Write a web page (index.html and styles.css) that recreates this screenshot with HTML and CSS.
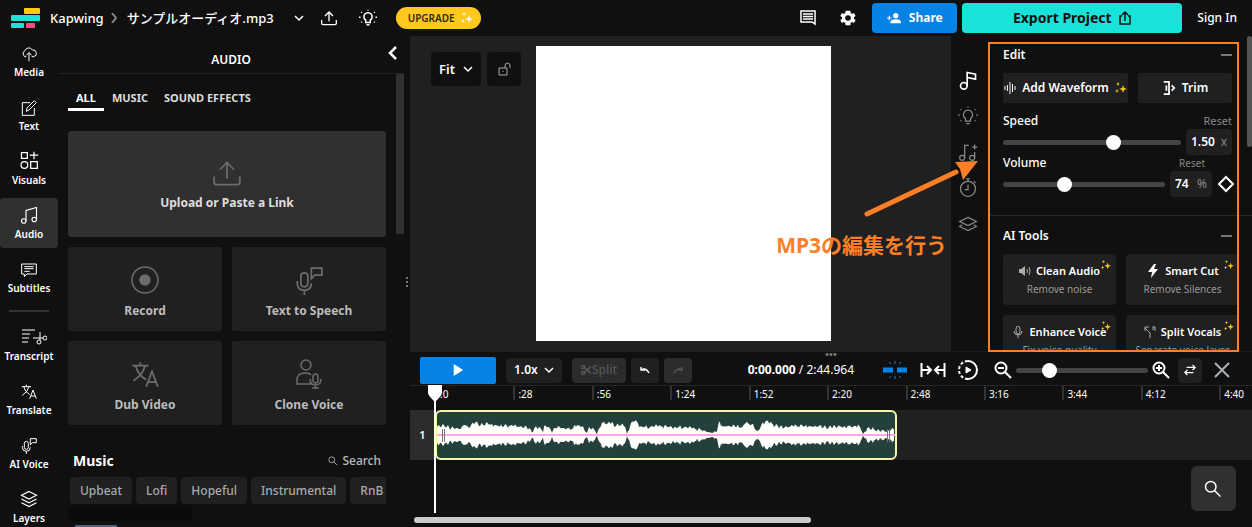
FILE: index.html
```html
<!DOCTYPE html>
<html lang="ja">
<head>
    <meta charset="UTF-8">
    <meta name="viewport" content="width=device-width, initial-scale=1.0">
    <title>Kapwing - サンプルオーディオ.mp3</title>
    <link rel="stylesheet" href="styles.css">
</head>
<body>
    <!-- shared icons -->
    <svg class="defs" aria-hidden="true">
        <symbol id="chevron" viewBox="0 0 10 10"><path d="M1 3l4 4 4-4"/></symbol>
        <symbol id="upload" viewBox="0 0 24 24"><path d="M12 17V3M6 9l6-6 6 6M1 15v5q0 2 2 2h18q2 0 2-2v-5"/></symbol>
        <symbol id="bulb" viewBox="0 0 24 24"><path d="M9 18v-3a5.500 5.500 0 1 1 6 0v3zM10 21h4M12 1v1M3 4l1 1M21 4l-1 1M0 11h2M22 11h2M3 18l1-1M21 18l-1-1"/></symbol>
        <symbol id="sparkle" viewBox="0 0 12 12"><path d="M8 3l1 3 3 1-3 1-1 3-1-3-3-1 3-1zM3 0l.6 1.400L5 2l-1.400.6L3 4l-.6-1.400L1 2l1.400-.6zM2 7l.6 1.400L4 9l-1.400.6L2 11l-.6-1.400L0 9l1.400-.6z"/></symbol>
        <symbol id="mic" viewBox="0 0 24 24"><path d="M5 8q0-3 3-3t3 3v6q0 3-3 3t-3-3zM2 12v2q0 6 6 6t6-6M8 20v4M14 10V1h9v6h-6z"/></symbol>
        <symbol id="translate" viewBox="0 0 24 24"><path d="M1 4h14M8 1v3M4 4q2 8 9 12M12 4Q10 12 2 17M13 22l5-13 5 13M15 18h6"/></symbol>
        <symbol id="layers" viewBox="0 0 24 24"><path d="M12 2l10 5-10 5L2 7zM2 12l10 5 10-5M2 17l10 5 10-5"/></symbol>
        <symbol id="lens" viewBox="0 0 24 24"><circle cx="9" cy="9" r="7"/><path d="M14 14l8 8"/></symbol>
    </svg>

    <header class="topbar">
        <svg class="logo" viewBox="0 0 30 20" role="img" aria-label="Kapwing">
            <rect x="13" y="0" width="16" height="6" rx="1" fill="#ffc81e"/>
            <rect x="0" y="7" width="29" height="6" rx="1" fill="#1be3d9"/>
            <rect x="0" y="15" width="13" height="5" rx="1" fill="#1be3d9"/>
            <rect x="15" y="15" width="9" height="5" rx="1" fill="#ff4a8b"/>
        </svg>
        <a class="brand" href="#">Kapwing</a>
        <svg class="icon crumb" viewBox="0 0 10 10"><path d="M3 0l4 5-4 5"/></svg>
        <span class="project">サンプルオーディオ.mp3</span>
        <button class="plain" aria-label="Project menu"><svg class="icon s10 thin"><use href="#chevron"/></svg></button>
        <button class="plain" aria-label="Upload"><svg class="icon s16"><use href="#upload"/></svg></button>
        <button class="plain" aria-label="Tips"><svg class="icon s18"><use href="#bulb"/></svg></button>
        <button class="upgrade">UPGRADE <svg class="spark s12"><use href="#sparkle"/></svg></button>
        <div class="top_right">
            <button class="plain" aria-label="Comments"><svg class="icon s16" viewBox="0 0 16 16"><path d="M1 1h14v13l-3-2H1zM3 4h10M3 6.500h10M3 9h10" stroke-width="1.500"/></svg></button>
            <button class="plain" aria-label="Settings"><svg class="s16 solid" viewBox="2 2 20 20"><path fill-rule="evenodd" d="M19.400 13a7.500 7.500 0 0 0 0-2l2.100-1.600-2-3.500-2.500 1a7.500 7.500 0 0 0-1.700-1L15 3H9l-.4 2.900a7.500 7.500 0 0 0-1.700 1l-2.500-1-2 3.500L4.600 11a7.500 7.500 0 0 0 0 2l-2.200 1.600 2 3.500 2.500-1a7.500 7.500 0 0 0 1.700 1L9 21h6l.3-2.900a7.500 7.500 0 0 0 1.700-1l2.500 1 2-3.500zM12 15.500a3.500 3.500 0 1 1 0-7 3.500 3.500 0 0 1 0 7z"/></svg></button>
            <button class="share"><svg class="solid s14" viewBox="0 0 24 24"><circle cx="15" cy="8" r="4.500"/><path d="M6 21v-2q0-5 9-5t9 5v2zM3 8h2v3h3v2H5v3H3v-3H0v-2h3z"/></svg> Share</button>
            <button class="export">Export Project <svg class="icon s14 thin" viewBox="0 0 14 14"><path d="M4 5H2v8h10V5h-2M7 10V1M4 4l3-3 3 3"/></svg></button>
            <a class="signin" href="#">Sign In</a>
        </div>
    </header>

    <div class="workspace">
        <nav class="sidebar">
            <a href="#"><svg class="icon s16" viewBox="0 0 24 24"><path d="M8 16H6a5 5 0 0 1 0-9 6 6 0 0 1 11-1 5 5 0 0 1 2 10h-3M12 23V10M8 14l4-4 4 4"/></svg>Media</a>
            <a href="#"><svg class="icon s16" viewBox="0 0 24 24"><path d="M14 4H2v19h18V12M8 17l1-5L20 1l3 3-11 11z"/></svg>Text</a>
            <a href="#"><svg class="icon s20" viewBox="0 0 24 24"><path d="M3 3h7v7H3zM14 14h8v8h-8zM18 2v9M13 6h10"/><circle cx="6.500" cy="18" r="4"/></svg>Visuals</a>
            <a href="#" class="active"><svg class="icon s18" viewBox="0 0 24 24"><path d="M8 20V6l14-4v16"/><circle cx="5" cy="20" r="3"/><circle cx="19" cy="18" r="3"/></svg>Audio</a>
            <a href="#"><svg class="icon s16" viewBox="0 0 24 24"><path d="M1 3h22v15H9l-4 4v-4H1zM5 7h14M5 10h14M5 14h8"/></svg>Subtitles</a>
            <hr>
            <a href="#"><svg class="icon wide" viewBox="0 0 26 18"><path d="M1 2h13M1 6h8M1 10h7M1 14h6M19 4v8M12 10h10"/><circle cx="18" cy="14" r="2"/><circle cx="24" cy="10" r="2"/></svg>Transcript</a>
            <a href="#"><svg class="icon s16"><use href="#translate"/></svg>Translate</a>
            <a href="#"><svg class="icon s16"><use href="#mic"/></svg>AI Voice</a>
            <a href="#"><svg class="icon s18"><use href="#layers"/></svg>Layers</a>
        </nav>

        <section class="panel">
            <div class="panel_head">
                <h2>AUDIO</h2>
                <button class="plain collapse" aria-label="Collapse"><svg class="icon s14" viewBox="0 0 14 14"><path d="M11 1L5 7l6 6" stroke-width="2.500"/></svg></button>
            </div>
            <div class="panel_body">
                <div class="tabs">
                    <button class="on">ALL</button>
                    <button>MUSIC</button>
                    <button>SOUND EFFECTS</button>
                </div>
                <div class="cards">
                    <button class="card upload"><svg class="icon s28"><use href="#upload"/></svg>Upload or Paste a Link</button>
                    <button class="card"><svg class="icon s30" viewBox="0 0 30 30"><circle cx="15" cy="15" r="13"/><circle cx="15" cy="15" r="5" fill="currentColor"/></svg>Record</button>
                    <button class="card"><svg class="icon s28"><use href="#mic"/></svg>Text to Speech</button>
                    <button class="card"><svg class="icon s28"><use href="#translate"/></svg>Dub Video</button>
                    <button class="card"><svg class="icon s30" viewBox="0 0 30 30"><circle cx="12" cy="6" r="5"/><path d="M17 25H3v-4q0-7 8-7 5 0 6 2M19 18q0-3 2.500-3t2.500 3v3q0 3-2.500 3T19 21zM16 20q0 6 5.500 6t5.500-6M21.500 26v4M18 29h7"/></svg>Clone Voice</button>
                </div>
                <div class="music_head">
                    <h3>Music</h3>
                    <button class="plain"><svg class="icon s10"><use href="#lens"/></svg> Search</button>
                </div>
                <div class="chips">
                    <button>Upbeat</button>
                    <button>Lofi</button>
                    <button>Hopeful</button>
                    <button>Instrumental</button>
                    <button>RnB</button>
                </div>
                <div class="skeleton"></div>
                <div class="cover"></div>
            </div>
        </section>
        <div class="drag_v"></div>

        <main class="editor">
            <div class="stage">
                <div class="canvas">
                    <div class="canvas_tools">
                        <label class="drop fit"><select aria-label="Zoom"><option>Fit</option></select><svg class="icon s10"><use href="#chevron"/></svg></label>
                        <button class="lock" aria-label="Lock"><svg class="icon s14" viewBox="0 0 14 14"><path d="M2 6h8v7H2zM8 6V4q0-3 2.500-3T13 4v2M6 9v1"/></svg></button>
                    </div>
                    <div class="page"></div>
                </div>
                <div class="rail">
                    <button class="plain current" aria-label="Audio"><svg class="icon s20" viewBox="0 0 24 24"><circle cx="7" cy="19" r="4"/><path d="M11 19V3l10 2v6l-10-2"/></svg></button>
                    <button class="plain" aria-label="Effects"><svg class="icon s20"><use href="#bulb"/></svg></button>
                    <button class="plain" aria-label="Generate"><svg class="icon s20" viewBox="0 0 24 24"><path d="M8 19V4h5M20 12v7M17 6h6M20 3v6"/><circle cx="5" cy="19" r="3"/><circle cx="17" cy="19" r="3"/></svg></button>
                    <button class="plain" aria-label="Timing"><svg class="icon s20" viewBox="0 0 24 24"><circle cx="12" cy="13" r="9"/><path d="M12 8v6H8M10 1h4M12 1v3M19 4l2 2"/></svg></button>
                    <button class="plain" aria-label="Arrange"><svg class="icon s20" viewBox="0 0 24 24"><path d="M12 4l10 5-10 5L2 9zM5 13l-3 2 10 5 10-5-3-2"/></svg></button>
                </div>
                <aside class="props">
                    <div class="props_head"><h3>Edit</h3><button class="plain minus" aria-label="Collapse Edit"></button></div>
                    <div class="edit_row">
                        <button><svg class="icon s12" viewBox="0 0 12 12"><path d="M1 4v4M3.500 3v6M6 0v12M8.500 2v8M11 4v4"/></svg>Add Waveform<svg class="spark s12"><use href="#sparkle"/></svg></button>
                        <button class="trim"><svg class="icon s14" viewBox="0 0 14 16"><path d="M1 1h6v14H1M4 5v6M10 5l3 3-3 3" stroke-width="2"/></svg>Trim</button>
                    </div>
                    <div class="field_head"><label for="speed">Speed</label><button class="plain">Reset</button></div>
                    <div class="field">
                        <input type="range" id="speed" min="0" max="100" value="63">
                        <span class="value"><input type="text" value="1.50" aria-label="Speed value">x</span>
                    </div>
                    <div class="field_head volume"><label for="volume">Volume</label><button class="plain">Reset</button></div>
                    <div class="field">
                        <input type="range" id="volume" min="0" max="200" value="74">
                        <span class="value percent"><input type="text" value="74" aria-label="Volume value">%</span>
                        <button class="plain key" aria-label="Keyframe"><svg class="icon s18" viewBox="0 0 18 18"><path d="M9 2l7 7-7 7-7-7z" stroke-width="2"/></svg></button>
                    </div>
                    <div class="props_head ai"><h3>AI Tools</h3><button class="plain minus" aria-label="Collapse AI Tools"></button></div>
                    <div class="tools">
                        <button><b><svg class="solid s12 dim" viewBox="0 0 12 12"><path d="M0 4h2l4-3v10L2 8H0z"/><path d="M8 4q1 2 0 4M10 2q2 4 0 8" fill="none" stroke="currentColor"/></svg>Clean Audio</b><span>Remove noise</span><svg class="spark corner"><use href="#sparkle"/></svg></button>
                        <button><b><svg class="solid s14" viewBox="0 0 12 14"><path d="M7 0L1 8h4l-1 6 7-9H7l2-5z"/></svg>Smart Cut</b><span>Remove Silences</span><svg class="spark corner"><use href="#sparkle"/></svg></button>
                        <button><b><svg class="icon s12 dim" viewBox="0 0 12 12"><path d="M4 3q0-3 2-3t2 3v2q0 3-2 3T4 5zM2 5q0 4 4 4t4-4M6 9v3"/></svg>Enhance Voice</b><span>Fix voice quality</span><svg class="spark corner"><use href="#sparkle"/></svg></button>
                        <button><b><svg class="icon s12 dim" viewBox="0 0 12 12"><path d="M6 12V7L1 2M1 5V1h4M8 4l3-3M8 1h3v4"/></svg>Split Vocals</b><span>Separate voice layer</span><svg class="spark corner"><use href="#sparkle"/></svg></button>
                    </div>
                </aside>
                <div class="scroll_thumb"></div>
                <!-- callout -->
                <div class="callout_box"></div>
                <svg class="callout_arrow" viewBox="0 0 114 58"><path d="M3 54L92 12" stroke="#ff7f27" stroke-width="5" stroke-linecap="round"/><path d="M114 1L91 2l5 7 3 11z" fill="#ff7f27"/></svg>
                <p class="callout_text">MP3の編集を行う</p>
            </div>

            <div class="timeline">
                <div class="toolbar">
                    <button class="play" aria-label="Play"><svg class="solid s12" viewBox="0 0 12 14"><path d="M1 0l11 7-11 7z"/></svg></button>
                    <label class="drop rate"><select aria-label="Playback rate"><option>1.0x</option></select><svg class="icon s10"><use href="#chevron"/></svg></label>
                    <button class="split" disabled><svg class="icon s10" viewBox="0 0 12 12"><circle cx="2" cy="2" r="2"/><circle cx="2" cy="10" r="2"/><path d="M4 3l8 7M4 9l8-7"/></svg>Split</button>
                    <button class="step" aria-label="Undo"><svg class="icon s12" viewBox="0 0 12 12"><path d="M2 3v3h4M2 6q5-3 8 3" stroke-width="1.500"/></svg></button>
                    <button class="step" aria-label="Redo" disabled><svg class="icon s12" viewBox="0 0 12 12"><path d="M10 3v3H6M10 6Q5 3 2 9" stroke-width="1.500"/></svg></button>
                    <p class="time"><b>0:00.000</b> / 2:44.964</p>
                    <button class="plain snap" aria-label="Snap"><svg class="icon s26" viewBox="0 0 26 20"><path d="M1 10h10M15 10h10" stroke-width="5"/><path d="M13 1v3M13 16v3M7 2l2 2M19 2l-2 2M7 18l2-2M19 18l-2-2" stroke-width="1"/></svg></button>
                    <button class="plain" aria-label="Fit timeline"><svg class="icon s26" viewBox="0 0 26 16"><path d="M1.500 1v14M24.500 1v14M2 8h9M7 4l4 4-4 4M24 8h-9M19 4l-4 4 4 4" stroke-width="2"/></svg></button>
                    <button class="plain" aria-label="Preview"><svg class="icon s20" viewBox="0 0 20 20"><path d="M10 1a9 9 0 0 1 0 18" stroke-width="2"/><path d="M10 19a9 9 0 0 1 0-18" stroke-width="2" stroke-dasharray="3 2"/><path d="M8 7l5 3-5 3z" fill="currentColor" stroke-width="1"/></svg></button>
                    <div class="zoom">
                        <button class="plain" aria-label="Zoom out"><svg class="icon s18" viewBox="0 0 18 18"><circle cx="7" cy="7" r="5.500"/><path d="M11 11l6 6M4 7h6"/></svg></button>
                        <input type="range" min="0" max="100" value="22" aria-label="Timeline zoom">
                        <button class="plain" aria-label="Zoom in"><svg class="icon s18" viewBox="0 0 18 18"><circle cx="7" cy="7" r="5.500"/><path d="M11 11l6 6M4 7h6M7 4v6"/></svg></button>
                    </div>
                    <button class="swap" aria-label="Swap"><svg class="icon s12" viewBox="0 0 14 14"><path d="M3 4h10M10 1l3 3-3 3M11 10H1M4 7l-3 3 3 3" stroke-width="1.500"/></svg></button>
                    <button class="plain close" aria-label="Close"><svg class="icon s16" viewBox="0 0 16 16"><path d="M1 1l14 14M15 1L1 15" stroke-width="2"/></svg></button>
                </div>
                <ol class="ruler">
                    <li>:0</li><li>:28</li><li>:56</li><li>1:24</li><li>1:52</li><li>2:20</li><li>2:48</li><li>3:16</li><li>3:44</li><li>4:12</li><li>4:40</li>
                </ol>
                <div class="track">
                    <span class="track_no">1</span>
                    <div class="lane">
                        <div class="clip">
                            <svg viewBox="0 0 458 46" preserveAspectRatio="none">
                                <polygon id="wave" fill="#fffffb"/>
                                <path d="M0 23h458" stroke="#ffa6ee" stroke-width="2"/>
                                <path d="M5.500 17v13M7.500 17v13M450.500 17v13M452.500 17v13" stroke="#777"/>
                            </svg>
                        </div>
                    </div>
                </div>
                <div class="empty"></div>
                <div class="hscroll"></div>
                <svg class="playhead" viewBox="0 0 14 128"><path d="M0 0h14v8q0 2-3 5l-3 3v112H6V16l-3-3Q0 10 0 8z" fill="#fff"/></svg>
            </div>
        </main>
    </div>
    <button class="find" aria-label="Search"><svg class="icon s18"><use href="#lens"/></svg></button>

    <script>
        // [x, amplitude] of the sample track
        const peaks = [[0,8],[8,10],[13,7],[23,6],[27,11],[32,7],[38,13],[43,10],[50,11],[60,9],[75,9],[90,8],[95,3],[99,8],[103,8],[106,3],[108,10],[112,8],[115,3],[119,8],[134,6],[136,5],[138,10],[145,8],[150,2],[152,8],[158,5],[160,1],[163,9],[167,13],[170,11],[172,13],[178,10],[185,10],[188,8],[190,1],[193,9],[198,15],[203,9],[210,8],[217,9],[230,8],[243,8],[250,8],[258,6],[268,4],[276,2],[280,5],[282,13],[286,8],[292,9],[300,9],[305,7],[309,13],[313,10],[317,9],[320,3],[324,10],[331,15],[336,10],[345,8],[360,9],[390,8],[423,9],[426,1],[432,8],[438,5],[450,4],[458,7]];

        let upper = [];
        let lower = [];
        for(let i = 0; i < peaks.length-1; i++) {
            let [x1, a1] = peaks[i];
            let [x2, a2] = peaks[i+1];
            for(let x = x1; x < x2; x++) {
                let amp = a1 + (a2-a1)*(x-x1)/(x2-x1);
                amp += (Math.sin(x*1.3) + Math.sin(x*x*0.37))*Math.min(1, amp/6);
                upper.push(x + "," + (23-amp).toFixed(1));
                lower.unshift(x + "," + (23+amp).toFixed(1));
            }
        }
        document.querySelector("#wave").setAttribute("points", upper.concat(lower).join(" "));
    </script>
</body>
</html>
```
FILE: styles.css
```css
* {
    margin: 0;
    padding: 0;
    box-sizing: border-box;
}

body {
    display: flex;
    flex-direction: column;
    height: 100vh;
    overflow: hidden;
    background-color: #101010;
    color: #fff;
    font-family: "Noto Sans", "Noto Sans CJK JP", sans-serif;
    font-size: 12px;
    line-height: 16px;
}

button, input, select {
    border: none;
    border-radius: 4px;
    background-color: #202020;
    color: inherit;
    font: inherit;
    white-space: nowrap;
}

a {
    color: inherit;
    text-decoration: none;
}

/* icons */
.defs {
    display: none;
}
svg {
    flex: none;
    display: block;
}
.icon {
    fill: none;
    stroke: currentColor;
    stroke-width: 2;
}
.thin { stroke-width: 1.5; }
.solid { fill: currentColor; }
.spark { fill: #ffc81e; }
.dim { color: #aaa; }
.s10 { width: 10px; height: 10px; }
.s12 { width: 12px; height: 12px; }
.s14 { width: 14px; height: 14px; }
.s16 { width: 16px; height: 16px; }
.s18 { width: 18px; height: 18px; }
.s20 { width: 20px; height: 20px; }
.s26 { width: 26px; height: 20px; }
.s28 { width: 28px; height: 28px; }
.s30 { width: 30px; height: 30px; }

.plain {
    display: flex;
    align-items: center;
    gap: 4px;
    background: none;
}

/* header */
.topbar {
    display: flex;
    align-items: center;
    flex: none;
    height: 36px;
    padding: 0 15px 0 11px;
}
.logo {
    width: 30px;
    height: 20px;
    margin-right: 9px;
}
.brand, .project {
    font-size: 13px;
    font-weight: 500;
}
.signin {
    font-weight: 500;
}
.crumb {
    width: 10px;
    height: 10px;
    margin: 0 8px 0 5px;
    color: #888;
}
.project {
    margin-right: 20px;
}
.topbar > .plain {
    margin-right: 17px;
}
.topbar > .plain + .plain {
    margin-right: 22px;
}
.topbar > .plain + .plain + .plain {
    margin-right: 19px;
}
.upgrade {
    display: flex;
    align-items: center;
    gap: 6px;
    height: 22px;
    padding: 0 8px 0 12px;
    border-radius: 11px;
    background-color: #ffc81e;
    color: #332a10;
    font-size: 10px;
    font-weight: 600;
}
.upgrade .spark {
    fill: #fff;
}
.top_right {
    display: flex;
    align-items: center;
    margin-left: auto;
}
.top_right .plain {
    margin-right: 24px;
}
.top_right .plain + .plain {
    margin-right: 16px;
}
.share, .export {
    display: flex;
    align-items: center;
    justify-content: center;
    gap: 8px;
    width: 85px;
    height: 30px;
    margin-right: 5px;
    background-color: #0683e6;
    font-weight: 700;
}
.export {
    gap: 6px;
    width: 220px;
    margin-right: 15px;
    background-color: #19e3d9;
    color: #101010;
    font-size: 14px;
}

.workspace {
    display: flex;
    flex: 1;
    min-height: 0;
}

/* left menu */
.sidebar {
    display: flex;
    flex-direction: column;
    flex: none;
    gap: 4px;
    width: 58px;
    overflow: hidden;
}
.sidebar a {
    display: flex;
    flex-direction: column;
    align-items: center;
    justify-content: flex-end;
    flex: none;
    gap: 2px;
    height: 50px;
    padding-bottom: 6px;
    border-radius: 4px;
    font-size: 10px;
    font-weight: 600;
}
.sidebar .icon {
    stroke-width: 1.5;
}
.sidebar .wide {
    width: 26px;
    height: 18px;
    margin-left: 10px;
    stroke-width: 1;
}
.sidebar .active {
    background-color: #303030;
}
.sidebar hr {
    flex: none;
    width: 40px;
    height: 2px;
    margin: 4px auto;
    border: none;
    background-color: #333;
}

/* audio panel */
.panel {
    display: flex;
    flex-direction: column;
    flex: none;
    width: 346px;
    overflow: hidden;
}
.panel_head {
    display: flex;
    align-items: center;
    height: 38px;
    padding: 10px 5px 0 0;
    border-bottom: 1px solid #222;
}
.panel_head h2 {
    flex: 1;
    padding-left: 19px;
    font-size: 12px;
    font-weight: 600;
    text-align: center;
}
.collapse {
    align-self: flex-start;
}
.panel_body {
    display: flex;
    flex-direction: column;
    flex: 1;
    min-height: 0;
    padding: 16px 18px 0 10px;
    background: linear-gradient(#303030, #303030) right top / 8px 160px no-repeat;
}
.tabs {
    display: flex;
    flex: none;
    margin-bottom: 20px;
    font-size: 11px;
    font-weight: 700;
}
.tabs button {
    padding: 0 8px 2px;
    border-bottom: 3px solid transparent;
    border-radius: 0;
    background: none;
    color: #ddd;
}
.tabs .on {
    border-color: #fff;
    color: #fff;
}
.cards {
    display: grid;
    grid-template-columns: 1fr 1fr;
    flex: none;
    gap: 10px;
}
.card {
    display: flex;
    flex-direction: column;
    align-items: center;
    justify-content: flex-end;
    gap: 8px;
    height: 84px;
    padding-bottom: 12px;
    border-radius: 3px;
    color: #bbb;
    font-weight: 700;
}
.card .icon {
    color: #6c6c6c;
    stroke-width: 1.5;
}
.upload {
    grid-column: 1 / 3;
    height: 106px;
    padding-bottom: 26px;
    background-color: #303030;
    color: #ddd;
}
.music_head {
    display: flex;
    align-items: center;
    justify-content: space-between;
    flex: none;
    margin: 28px 5px 8px;
}
.music_head h3 {
    font-size: 14px;
    font-weight: 700;
}
.music_head button {
    color: #bbb;
    font-weight: 500;
}
.chips {
    display: flex;
    flex: none;
    gap: 4px;
    padding-left: 2px;
    overflow: hidden;
}
.chips button {
    flex: none;
    height: 27px;
    padding: 0 10px;
    color: #aaa;
    font-weight: 500;
}
.skeleton {
    flex: none;
    width: 124px;
    height: 14px;
    margin-top: 3px;
    background-color: #0b0b0b;
}
.cover {
    flex: none;
    width: 42px;
    height: 20px;
    margin: 4px 0 0 7px;
    background-color: #56617a;
}
.drag_v {
    flex: none;
    align-self: center;
    width: 2px;
    height: 10px;
    margin: 0 2px;
    border-top: 2px solid #777;
    border-bottom: 2px solid #777;
    background: linear-gradient(#777, #777) center / 2px 2px no-repeat;
}

/* canvas */
.editor {
    display: flex;
    flex-direction: column;
    flex: 1;
    min-width: 0;
}
.stage {
    position: relative;
    display: flex;
    flex: 1;
    min-height: 0;
}
.canvas {
    display: grid;
    grid-template-columns: 1fr auto 1fr;
    flex: 1;
    padding: 10px 0 10px 5px;
    background-color: #202020;
}
.canvas_tools {
    display: flex;
    align-items: flex-start;
    gap: 6px;
    padding: 6px 0 0 16px;
}
.page {
    aspect-ratio: 1;
    height: 100%;
    background-color: #fff;
}
.drop {
    display: grid;
    align-items: center;
}
.drop select, .drop .icon {
    grid-area: 1 / 1;
}
.drop select {
    appearance: none;
    height: 100%;
    padding-left: 8px;
    font-weight: 600;
}
.drop .icon {
    justify-self: end;
    margin-right: 8px;
    pointer-events: none;
    stroke-width: 1.5;
}
.fit, .lock {
    height: 34px;
}
.fit {
    width: 50px;
}
.fit select, .lock {
    background-color: #101010;
}
.fit select {
    font-size: 13px;
}
.lock {
    width: 34px;
    padding: 0 10px;
    color: #aaa;
}
.lock .icon {
    stroke-width: 1;
}
.rail {
    display: flex;
    flex-direction: column;
    align-items: center;
    gap: 16px;
    width: 37px;
    padding: 34px 3px 0 0;
    color: #888;
}
.rail .icon {
    stroke-width: 1.5;
}
.rail .current {
    color: #fff;
}
.rail .current .icon {
    stroke-width: 2;
}

/* properties */
.props {
    flex: none;
    width: 264px;
    padding: 11px 20px 0 15px;
    overflow: hidden;
}
.props_head {
    display: flex;
    align-items: center;
    justify-content: space-between;
}
.props_head h3 {
    font-size: 12px;
    font-weight: 600;
}
.minus {
    width: 11px;
    height: 2px;
    border-radius: 0;
    background-color: #777;
}
.edit_row {
    display: flex;
    gap: 10px;
    margin: 10px 0;
}
.edit_row button {
    display: flex;
    align-items: center;
    justify-content: center;
    gap: 6px;
    width: 125px;
    height: 30px;
    border-radius: 2px;
    font-weight: 600;
}
.edit_row .icon {
    stroke-width: 1;
}
.edit_row .trim {
    flex: 1;
    width: auto;
}
.field_head {
    display: flex;
    align-items: center;
    justify-content: space-between;
    font-weight: 500;
}
.field_head button {
    color: #888;
    font-size: 11px;
    font-weight: 400;
}
.field_head.volume {
    padding-right: 27px;
}
.field_head.volume button {
    font-size: 10px;
}
.field {
    display: flex;
    align-items: center;
    gap: 5px;
}
.value {
    display: flex;
    align-items: center;
    flex: none;
    width: 46px;
    height: 26px;
    padding: 0 5px;
    border-radius: 4px;
    background-color: #202020;
    color: #888;
}
.value input {
    flex: 1;
    width: 0;
    color: #fff;
    font-weight: 600;
}
.percent {
    width: 42px;
}
.key {
    margin-right: -3px;
}

input[type="range"] {
    flex: 1;
    appearance: none;
    min-width: 0;
    height: 16px;
    background: none;
}
input[type="range"]::-webkit-slider-runnable-track {
    height: 5px;
    border-radius: 3px;
    background-color: #444;
}
input[type="range"]::-webkit-slider-thumb {
    appearance: none;
    width: 15px;
    height: 15px;
    margin-top: -5px;
    border-radius: 50%;
    background-color: #fff;
}

.ai {
    margin: 18px -20px 10px -15px;
    padding: 12px 20px 0 15px;
    border-top: 1px solid #262626;
}
.tools {
    display: grid;
    grid-template-columns: 113px 113px;
    gap: 10px;
}
.tools button {
    position: relative;
    height: 51px;
}
.tools b {
    display: flex;
    align-items: center;
    justify-content: center;
    gap: 5px;
    margin-bottom: 2px;
    font-size: 11px;
    font-weight: 600;
}
.tools .icon {
    stroke-width: 1;
}
.tools span {
    color: #999;
    font-size: 10px;
}
.corner {
    position: absolute;
    top: 6px;
    right: 5px;
    width: 10px;
    height: 10px;
}
.scroll_thumb {
    position: absolute;
    top: 0;
    right: 0;
    width: 5px;
    height: 111px;
    border-radius: 3px;
    background-color: #555;
}

/* callout over the editor */
.callout_box {
    position: absolute;
    top: 6px;
    right: 13px;
    bottom: -1px;
    z-index: 1;
    width: 251px;
    border: 2px solid #ff7f27;
}
.callout_arrow {
    position: absolute;
    top: 124px;
    right: 274px;
    width: 114px;
    height: 58px;
}
.callout_text {
    position: absolute;
    top: 195px;
    right: 305px;
    color: #ff7f27;
    font-size: 21px;
    font-weight: 700;
    line-height: 28px;
}

/* timeline */
.timeline {
    position: relative;
    flex: none;
    border-top: 1px solid #1c1c1c;
}
.timeline::before {
    content: "";
    position: absolute;
    top: 1px;
    left: calc(50% - 6px);
    width: 12px;
    height: 3px;
    background: radial-gradient(circle, #777 1px, transparent 2px) 0 0 / 4px 3px;
}
.toolbar {
    display: flex;
    align-items: center;
    gap: 5px;
    height: 34px;
    padding: 3px 22px 0 10px;
    border-bottom: 1px solid #282828;
}
.play {
    display: flex;
    align-items: center;
    justify-content: center;
    width: 76px;
    height: 27px;
    margin-right: 5px;
    border-radius: 2px;
    background-color: #0683e6;
}
.rate {
    width: 56px;
    height: 25px;
    margin-right: 5px;
}
.split, .step, .swap {
    display: flex;
    align-items: center;
    justify-content: center;
    gap: 1px;
    width: 54px;
    height: 25px;
    font-weight: 500;
}
.split:disabled, .step:disabled {
    background-color: #2c2c2c;
    color: #555;
}
.step {
    width: 28px;
}
.time {
    flex: 1;
    padding-right: 23px;
    text-align: right;
    white-space: nowrap;
}
.time b {
    font-weight: 700;
}
.toolbar > .plain {
    margin-right: 7px;
}
.snap {
    color: #0683e6;
}
.zoom {
    display: flex;
    align-items: center;
    gap: 4px;
    width: 176px;
    margin: 0 3px 0 4px;
}
.swap {
    width: 24px;
    margin-right: 7px;
}
.toolbar > .close {
    margin-right: 0;
    color: #aab0b8;
}
.ruler {
    display: flex;
    height: 24px;
    padding-left: 25px;
    overflow: hidden;
    list-style: none;
    font-size: 10px;
}
.ruler li {
    flex: 0 0 calc(100% / 816 * 78 + 1px / 3);
    height: 14px;
    padding-left: 3px;
    border-left: 2px solid #333;
}
.track {
    display: flex;
    height: 50px;
    background-color: #202020;
}
.track_no {
    width: 25px;
    background-color: #2c2c2c;
    font-size: 11px;
    font-weight: 600;
    line-height: 50px;
    text-align: center;
}
.lane {
    flex: 1;
}
.clip {
    width: 57%;
    max-width: 462px;
    height: 50px;
    border: 2px solid #f5f5a5;
    border-radius: 6px;
    background-color: #23403d;
    overflow: hidden;
}
.clip svg {
    width: 100%;
    height: 46px;
}
.empty {
    height: 57px;
}
.hscroll {
    width: 397px;
    height: 6px;
    margin: 0 0 4px 4px;
    border-radius: 3px;
    background-color: #ccc;
}
.playhead {
    position: absolute;
    top: 33px;
    left: 18px;
    width: 14px;
    height: 128px;
}
.find {
    position: fixed;
    right: 16px;
    bottom: 16px;
    width: 45px;
    height: 45px;
    padding: 0 13px;
    border-radius: 6px;
    background-color: #303030;
}
```
